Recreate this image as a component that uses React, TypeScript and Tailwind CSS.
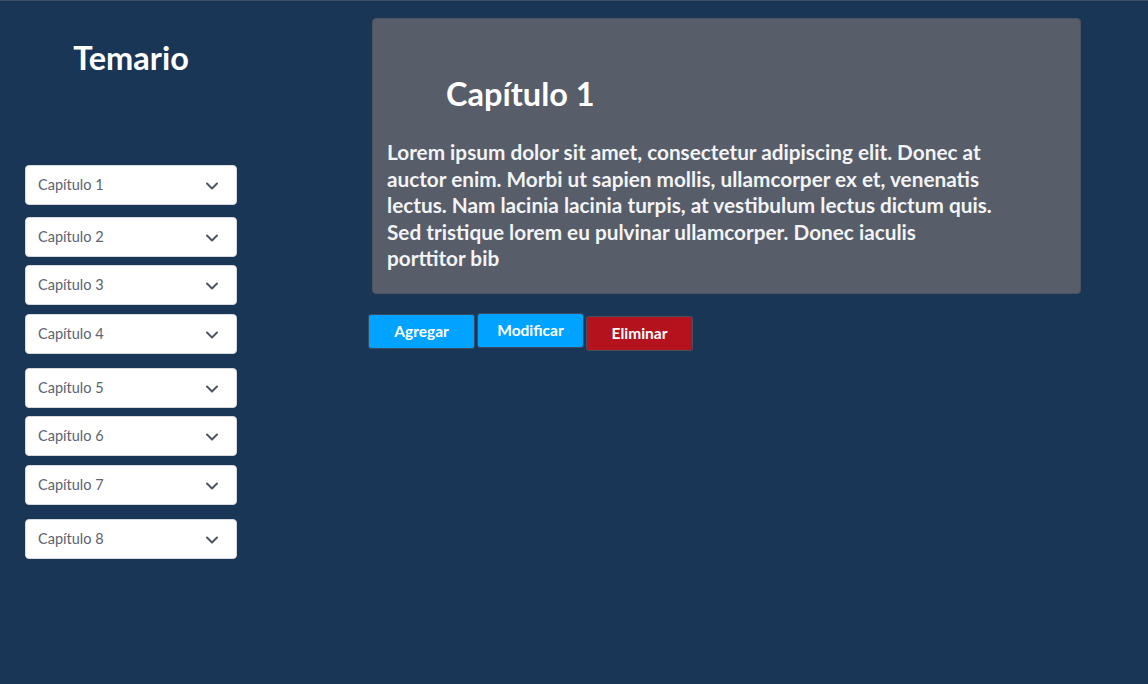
import { ChevronDown } from 'lucide-react'

const chapters = [
    { label: 'Capítulo 1', mt: 'mt-0' },
    { label: 'Capítulo 2', mt: 'mt-[12px]' },
    { label: 'Capítulo 3', mt: 'mt-[8px]' },
    { label: 'Capítulo 4', mt: 'mt-[9px]' },
    { label: 'Capítulo 5', mt: 'mt-[14px]' },
    { label: 'Capítulo 6', mt: 'mt-[8px]' },
    { label: 'Capítulo 7', mt: 'mt-[9px]' },
    { label: 'Capítulo 8', mt: 'mt-[14px]' },
]

function ChapterSelect({ label, mt }: { label: string; mt: string }) {
    return (
        <div
            className={`${mt} flex h-[40px] w-[212px] items-center justify-between rounded-[4px] border border-[#d5d9de] bg-white pl-[12px] pr-[14px]`}
        >
            <span className="text-[14.5px] text-[#5b6370]">{label}</span>
            <ChevronDown className="mt-[1px] h-[20px] w-[20px] text-[#4f5661]" strokeWidth={2.4} />
        </div>
    )
}

export default function App() {
    return (
        <div
            className="flex h-[684px] w-[1148px] border-t border-[#3e4f63] bg-[#1a3657] text-white"
            style={{ fontFamily: 'Lato, "Open Sans", sans-serif' }}
        >
            {/* Sidebar */}
            <aside className="flex w-[262px] flex-col pl-[25px]">
                <h1 className="mt-[37px] w-[212px] text-center text-[32.5px] font-bold leading-[40px]">Temario</h1>
                <div className="mt-[87px] flex flex-col">
                    {chapters.map((c) => (
                        <ChapterSelect key={c.label} label={c.label} mt={c.mt} />
                    ))}
                </div>
            </aside>

            {/* Content */}
            <main className="ml-[110px] flex flex-col pt-[17px]">
                <section className="h-[276px] w-[709px] rounded-[4px] border border-[#4b5260] bg-[#575d69] px-[14px]">
                    <h2 className="mt-[55px] pl-[59px] text-[32.5px] font-bold leading-[40px]">Capítulo 1</h2>
                    <p className="mt-[25px] w-[609px] text-[20.75px] font-bold leading-[26.5px] text-[#f3f4f6]">
                        Lorem ipsum dolor sit amet, consectetur adipiscing elit. Donec at auctor enim. Morbi ut sapien
                        mollis, ullamcorper ex et, venenatis lectus. Nam lacinia lacinia turpis, at vestibulum lectus
                        dictum quis. Sed tristique lorem eu pulvinar ullamcorper. Donec iaculis porttitor bib
                    </p>
                </section>

                <div className="-ml-[4px] mt-[20px] flex items-start gap-[2px]">
                    <button className="h-[35px] w-[107px] rounded-[3px] border border-[#3b4a5c] bg-[#00a3ff] text-[15.5px] font-bold text-white">
                        Agregar
                    </button>
                    <button className="-mt-[1px] h-[35px] w-[107px] rounded-[3px] border border-[#3b4a5c] bg-[#00a3ff] text-[15.5px] font-bold text-white">
                        Modificar
                    </button>
                    <button className="mt-[2px] h-[35px] w-[107px] rounded-[3px] border border-[#4a4f5c] bg-[#b4121c] text-[15.5px] font-bold text-white">
                        Eliminar
                    </button>
                </div>
            </main>
        </div>
    )
}
